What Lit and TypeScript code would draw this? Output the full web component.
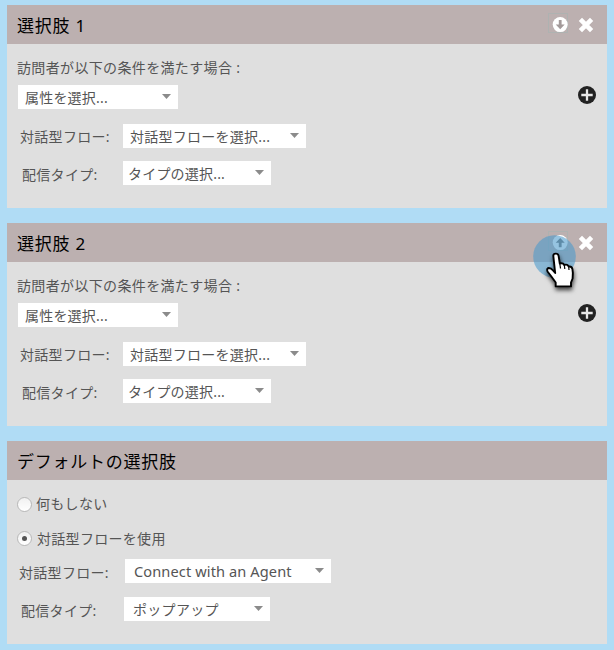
import { LitElement, html, css } from "lit";
import { customElement, property } from "lit/decorators.js";

const fonts = css`"Noto Sans", "Noto Sans CJK JP", sans-serif`;

@customElement("select-box")
class SelectBox extends LitElement {
  static styles = css`
    :host {
      display: flex;
      box-sizing: border-box;
      flex: none;
      height: 24px;
      background: #fff;
      padding: 0 7px 0 7px;
      justify-content: space-between;
      white-space: nowrap;
      font: 14px/26px ${fonts};
      color: #555;
    }
    svg { display: block; margin-top: 9px; width: 9px; height: 5px; flex: none; }
  `;
  render() {
    return html`<span><slot></slot></span>
      <svg viewBox="0 0 9 5"><path d="M0 0H9L4.5 5Z" fill="#8b8b8b" /></svg>`;
  }
}

@customElement("choice-card")
class ChoiceCard extends LitElement {
  @property() heading = "";
  @property() direction = "";
  static styles = css`
    :host {
      display: block;
      width: 600px;
      height: 203px;
      background: #dfdfdf;
      color: #555;
      font: 14px/20px ${fonts};
      letter-spacing: 0.3px;
    }
    header {
      box-sizing: border-box;
      height: 39px;
      background: #bcb0b0;
      display: flex;
      justify-content: space-between;
      padding: 0 12px 0 10px;
      color: #000;
      font-size: 17px;
      line-height: 41px;
      letter-spacing: 0.75px;
      white-space: nowrap;
    }
    .tools { display: flex; gap: 9px; padding-top: 8px; }
    .move { box-sizing: border-box; width: 20px; height: 20px; border: 1px solid #aeb2b1; }
    .move svg { display: block; width: 18px; height: 18px; overflow: visible; }
    .close { width: 18px; height: 18px; margin-top: 3px; }
  `;
  render() {
    const up = this.direction === "up";
    return html`<header>
        <span>${this.heading}</span>
        ${this.direction
          ? html`<div class="tools">
              <div class="move">
                <svg viewBox="0 0 18 18">
                  <circle cx="11.2" cy="10.6" r="7.5" fill="#fff" />
                  <g transform=${up ? "rotate(180 11.2 10.6)" : ""}>
                    <path d="M9.8 6H12.6V10.4H15.7L11.2 15.2L6.7 10.4H9.8Z" fill=${up ? "#777" : "#a39a9a"} />
                  </g>
                </svg>
              </div>
              <svg class="close" viewBox="0 0 18 18">
                <path d="M3.4 3.4L14.6 14.6M14.6 3.4L3.4 14.6" stroke="#fff" stroke-width="4.6" />
              </svg>
            </div>`
          : ""}
      </header>
      <slot></slot>`;
  }
}

@customElement("app-root")
class AppRoot extends LitElement {
  static styles = css`
    :host {
      display: flex;
      flex-direction: column;
      gap: 15px;
      box-sizing: border-box;
      position: relative;
      width: 614px;
      height: 650px;
      padding: 5px 7px;
      background: #b0dcf5;
      overflow: hidden;
    }
    .intro { height: 20px; margin: 14px 10px 7px; white-space: nowrap; letter-spacing: 0.35px; }
    .attr { display: flex; justify-content: space-between; padding: 0 11px; height: 24px; margin-bottom: 15px; }
    .add { width: 18px; height: 18px; margin-top: 1px; }
    .row { display: flex; height: 24px; margin-bottom: 13px; line-height: 25px; white-space: nowrap; }
    .row.last { margin-bottom: 0; }
    .name { box-sizing: border-box; width: 116px; padding-left: 13px; flex: none; }
    .name.type { padding-left: 15px; line-height: 27px; }
    .w160 { width: 160px; letter-spacing: 0.2px; }
    .w183 { width: 183px; letter-spacing: 0.25px; }
    .w148 { width: 148px; padding-left: 5px; letter-spacing: 0.2px; }
    .w206 { width: 206px; padding-left: 9px; font-size: 14.6px; line-height: 24px; letter-spacing: 0.1px; }
    .w146 { width: 146px; padding-left: 9px; }
    .option { display: flex; align-items: center; height: 20px; padding-left: 10px; gap: 5px; }
    .first { margin: 14px 0; gap: 4px; }
    .second { margin-bottom: 11px; line-height: 21px; }
    .radio {
      box-sizing: border-box;
      width: 15px;
      height: 15px;
      border: 1px solid #b8b8b8;
      border-radius: 50%;
      background: linear-gradient(#f1f1f1, #fff);
      display: grid;
      place-items: center;
    }
    .dot { width: 5px; height: 5px; border-radius: 50%; background: #555; }
    .flow { margin-bottom: 14px; }
    .flow .name { width: 118px; padding-left: 12px; line-height: 28px; }
    .delivery .name { width: 117px; padding-left: 14px; line-height: 28px; }
    .pointer { position: absolute; left: 530px; top: 232px; width: 55px; height: 70px; pointer-events: none; }
  `;

  choice(n: number, direction: string) {
    return html`<choice-card heading="選択肢 ${n}" direction=${direction}>
      <div class="intro">訪問者が以下の条件を満たす場合 :</div>
      <div class="attr">
        <select-box class="w160">属性を選択...</select-box>
        <svg class="add" viewBox="0 0 18 18">
          <circle cx="9" cy="9" r="9" fill="#222" />
          <path d="M9 3.3V14.7M3.3 9H14.7" stroke="#e8e8e8" stroke-width="2.3" />
        </svg>
      </div>
      <div class="row">
        <span class="name">対話型フロー:</span>
        <select-box class="w183">対話型フローを選択...</select-box>
      </div>
      <div class="row last">
        <span class="name type">配信タイプ:</span>
        <select-box class="w148">タイプの選択...</select-box>
      </div>
    </choice-card>`;
  }

  render() {
    return html`
      ${this.choice(1, "down")} ${this.choice(2, "up")}
      <choice-card heading="デフォルトの選択肢">
        <div class="option first"><span class="radio"></span><span>何もしない</span></div>
        <div class="option second">
          <span class="radio"><span class="dot"></span></span><span>対話型フローを使用</span>
        </div>
        <div class="row flow">
          <span class="name">対話型フロー:</span>
          <select-box class="w206">Connect with an Agent</select-box>
        </div>
        <div class="row last delivery">
          <span class="name">配信タイプ:</span>
          <select-box class="w146">ポップアップ</select-box>
        </div>
      </choice-card>
      <svg class="pointer" viewBox="0 0 55 70">
        <defs>
          <filter id="shade" x="-50%" y="-50%" width="200%" height="200%">
            <feDropShadow dx="0.5" dy="3" stdDeviation="2.2" flood-color="#000" flood-opacity=".7" />
          </filter>
        </defs>
        <circle cx="24.5" cy="24.5" r="21.3" fill="#4a9acb" fill-opacity=".58" />
        <path
          filter="url(#shade)"
          d="M23.3 23.8Q23.3 21.6 25.8 21.6Q28.2 21.6 28.6 23.8L29.8 31.5Q33 30.5 34.3 33Q37.2 31.8 38.7 34.5Q41.6 34 42.4 37Q43.3 41 42.6 46.5L41 50.5V54.4H25.7V50.5L21 44L17.5 39.5Q16.3 36.5 18.8 36Q21.2 36 22.8 38.2L25.2 41Z"
          fill="#fff" stroke="#050505" stroke-width="1.9" stroke-linejoin="round" />
        <path d="M29.8 31.5L30.5 36.5M34.3 33L34.8 37M38.7 34.5L39 38" fill="none" stroke="#050505" stroke-width="1.2" />
      </svg>
    `;
  }
}
